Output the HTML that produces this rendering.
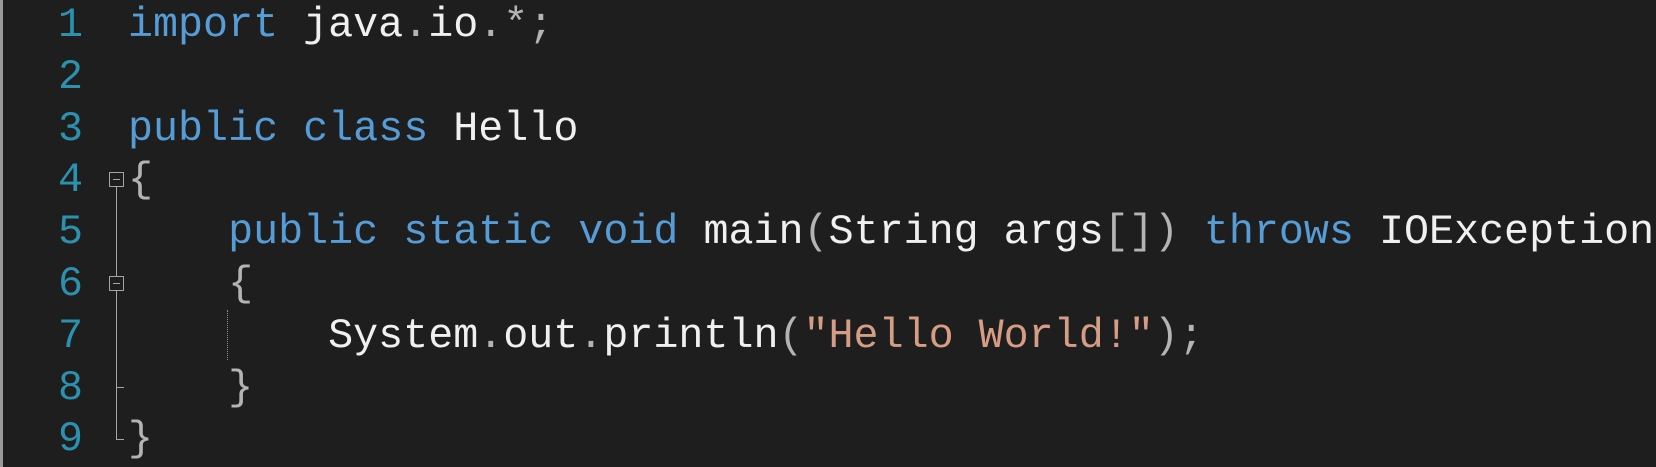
<!DOCTYPE html>
<html><head><meta charset="utf-8"><style>
html,body{margin:0;padding:0;}
body{width:1656px;height:467px;background:#1e1e1e;position:relative;overflow:hidden;font-family:"Liberation Mono",monospace;font-size:41.7px;}
.lb{position:absolute;left:0;top:0;width:3px;height:467px;background:#9a9a9a;}
.ln{position:absolute;left:0;width:83px;text-align:right;color:#2b91af;line-height:51.8px;height:51.8px;}
.cd{position:absolute;left:128px;white-space:pre;color:#f0f0f0;line-height:51.8px;height:51.8px;}
.k{color:#569cd6}.p{color:#b4b4b4}.s{color:#d69d85}
.g{position:absolute;background:#a5a5a5;}
.box{position:absolute;width:13px;height:13px;border:1px solid #a5a5a5;background:#1e1e1e;}
.box:after{content:"";position:absolute;left:3px;right:3px;top:6px;height:1px;background:#a5a5a5;}
</style></head><body>
<div class="lb"></div>
<div class="ln" style="top:0">1</div>
<div class="ln" style="top:51.8px">2</div>
<div class="ln" style="top:103.6px">3</div>
<div class="ln" style="top:155.4px">4</div>
<div class="ln" style="top:207.2px">5</div>
<div class="ln" style="top:259px">6</div>
<div class="ln" style="top:310.8px">7</div>
<div class="ln" style="top:362.6px">8</div>
<div class="ln" style="top:414.4px">9</div>

<div class="cd" style="top:0"><span class="k">import</span> java<span class="p">.</span>io<span class="p">.*;</span></div>
<div class="cd" style="top:103.6px"><span class="k">public</span> <span class="k">class</span> Hello</div>
<div class="cd" style="top:155.4px"><span class="p">{</span></div>
<div class="cd" style="top:207.2px">    <span class="k">public</span> <span class="k">static</span> <span class="k">void</span> main<span class="p">(</span>String args<span class="p">[])</span> <span class="k">throws</span> IOException</div>
<div class="cd" style="top:259px">    <span class="p">{</span></div>
<div class="cd" style="top:310.8px">        System<span class="p">.</span>out<span class="p">.</span>println<span class="p">(</span><span class="s">"Hello World!"</span><span class="p">);</span></div>
<div class="cd" style="top:362.6px">    <span class="p">}</span></div>
<div class="cd" style="top:414.4px"><span class="p">}</span></div>

<div class="g" style="left:116px;top:186px;width:1px;height:254px"></div>
<div class="g" style="left:116px;top:387px;width:8px;height:1px"></div>
<div class="g" style="left:116px;top:439px;width:8px;height:1px"></div>
<div class="box" style="left:109px;top:172px"></div>
<div class="box" style="left:109px;top:276px"></div>
<div style="position:absolute;left:227px;top:310px;width:0;height:50px;border-left:1px dotted #8a8a8a"></div>
</body></html>
